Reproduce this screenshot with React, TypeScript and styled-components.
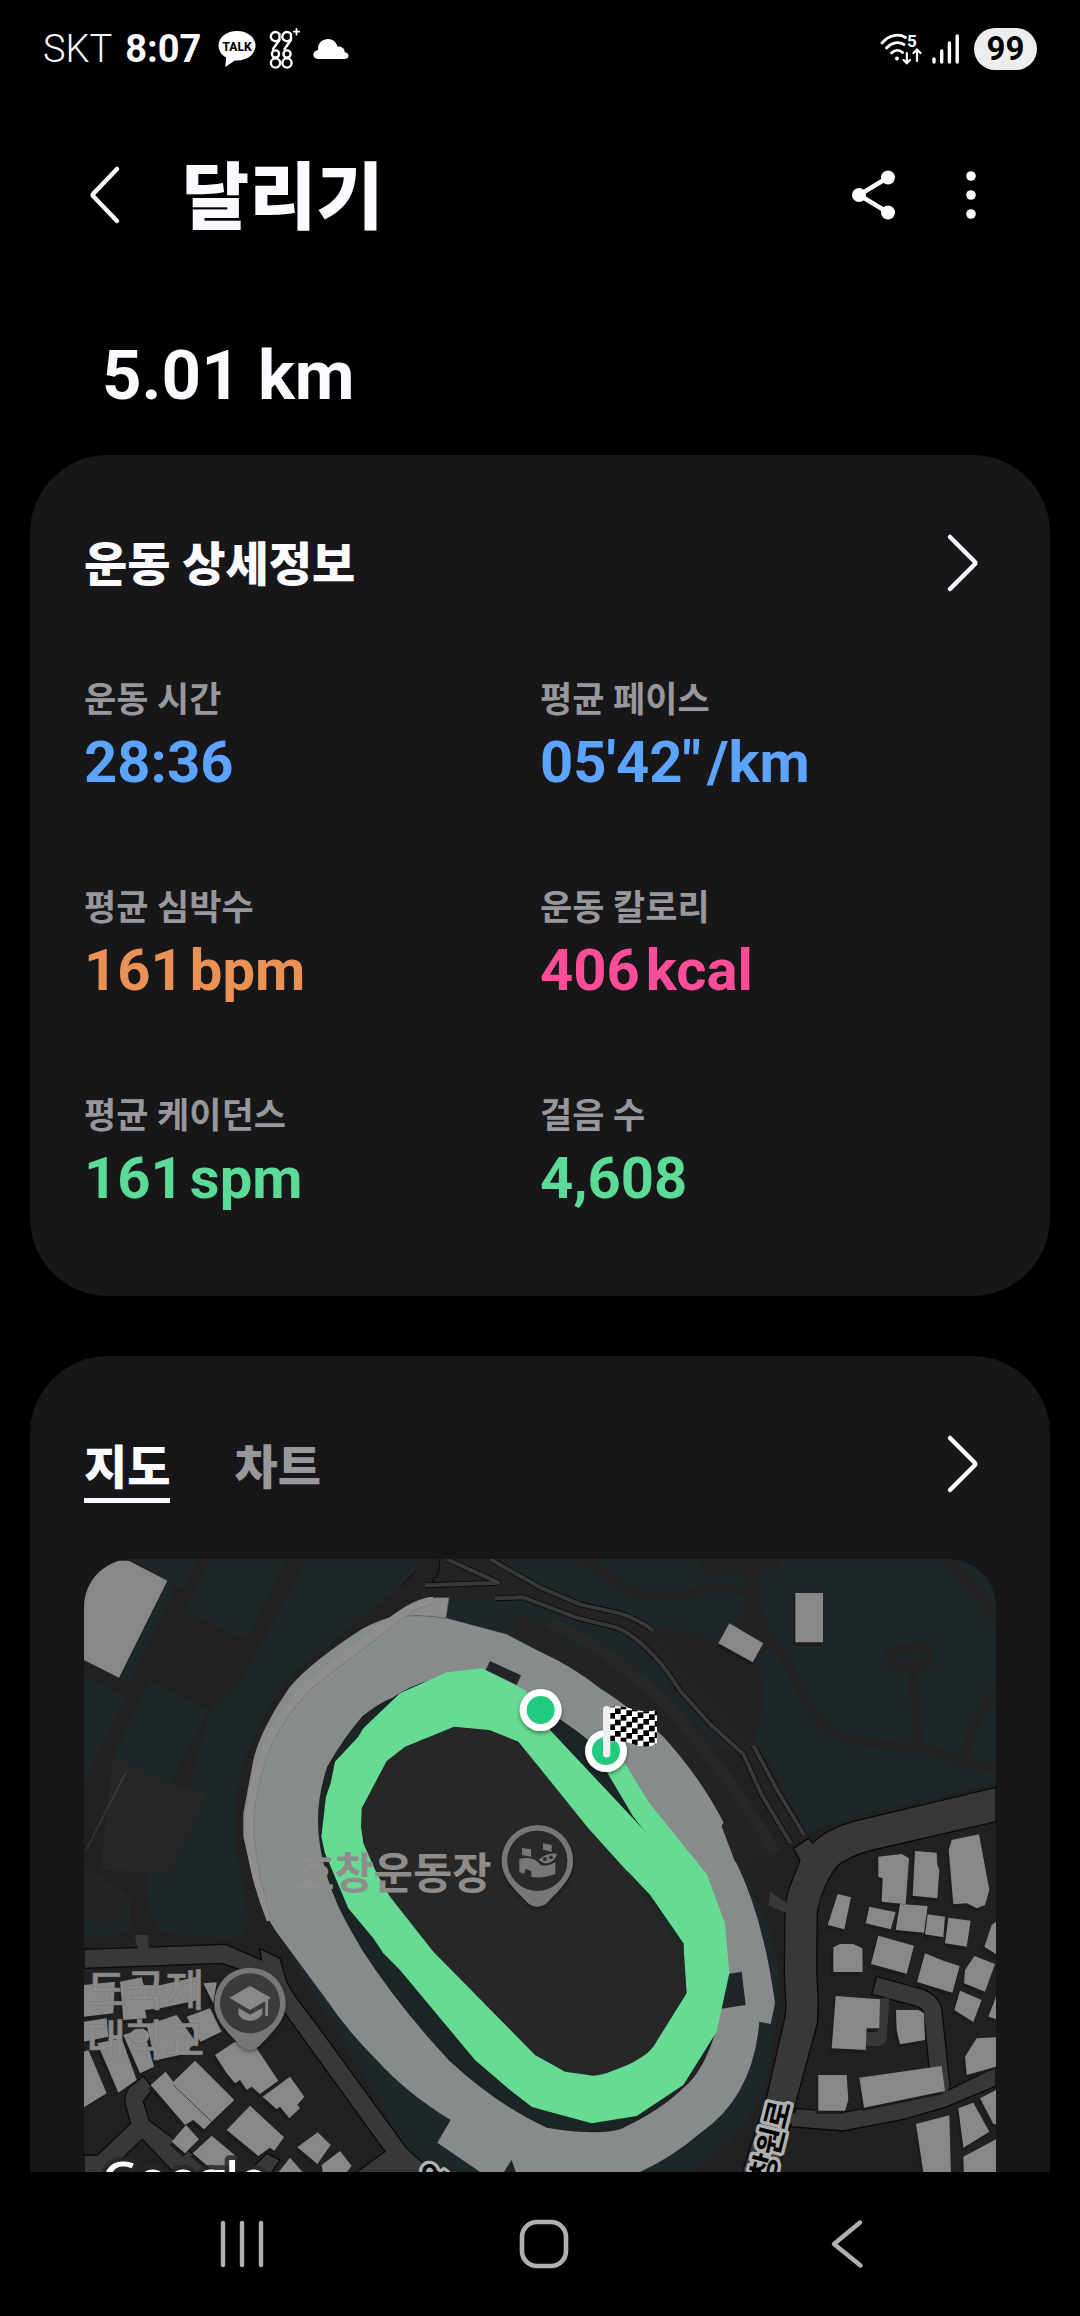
import React from "react";
import styled, { createGlobalStyle } from "styled-components";

const colors = {
  page: "#000000",
  card: "#171719",
  text: "#fafaff",
  muted: "#98979c",
  blue: "#5ca4ff",
  orange: "#ea9255",
  pink: "#ff4d97",
  green: "#5bdb97",
  nav: "#b0b0b0",
};

const GlobalStyle = createGlobalStyle`
  * { box-sizing: border-box; }
  body {
    margin: 0;
    background: ${colors.page};
    color: ${colors.text};
    font-family: Roboto, "Noto Sans CJK KR", sans-serif;
  }
  h1, h2, p, dl, dt, dd { margin: 0; }
  button {
    border: 0;
    padding: 0;
    background: none;
    color: inherit;
    font: inherit;
    cursor: pointer;
  }
  svg { display: block; }
`;

const Screen = styled.div`
  display: flex;
  flex-direction: column;
  height: 100vh;
  overflow: hidden;
`;

const StatusBar = styled.div`
  display: flex;
  flex: none;
  align-items: center;
  justify-content: space-between;
  height: 98px;
  padding: 0 43px;
`;

const StatusGroup = styled.div<{ $gap: number }>`
  display: flex;
  align-items: center;
  gap: ${(p) => p.$gap}px;
`;

const Carrier = styled.span`
  font-size: 38px;
  font-weight: 300;
  line-height: 48px;
`;

const Clock = styled.span`
  margin-right: 4px;
  font-size: 38px;
  font-weight: 700;
  line-height: 48px;
`;

const Battery = styled.span`
  width: 63px;
  margin-left: 4px;
  border-radius: 21px;
  background: #ededed;
  color: #000;
  font-family: Roboto, sans-serif;
  font-size: 33px;
  font-weight: 700;
  line-height: 42px;
  text-align: center;
`;

const AppBar = styled.header`
  display: flex;
  flex: none;
  align-items: center;
  height: 194px;
  padding: 0 76px 0 72px;
`;

const Title = styled.h1`
  flex: 1;
  margin-left: 44px;
  padding-top: 6px;
  font-size: 73px;
  font-weight: 800;
  line-height: 96px;
`;

const Actions = styled.div`
  display: flex;
  gap: 32px;
`;

const IconButton = styled.button`
  display: grid;
  flex: none;
  place-items: center;
  width: 66px;
  height: 66px;
`;

const Content = styled.main`
  flex: 1;
  min-height: 0;
  overflow-y: auto;
  scrollbar-width: none;
`;

const Distance = styled.p`
  padding: 4px 102px 0;
  font-size: 69px;
  font-weight: 700;
  line-height: 159px;
`;

const Card = styled.section`
  margin: 0 30px 60px;
  padding: 54px 54px 81px;
  border-radius: 78px;
  background: ${colors.card};
`;

const CardHeader = styled.div<{ $space: number }>`
  display: flex;
  align-items: center;
  justify-content: space-between;
  height: 108px;
  margin-bottom: ${(p) => p.$space}px;
`;

const CardTitle = styled.h2`
  padding-top: 4px;
  font-size: 47px;
  font-weight: 800;
  line-height: 64px;
`;

const Stats = styled.dl`
  display: grid;
  grid-template-columns: 1fr 1fr;
  row-gap: 84px;
`;

const StatLabel = styled.dt`
  padding-top: 2px;
  color: ${colors.muted};
  font-size: 35px;
  font-weight: 700;
  line-height: 48px;
`;

const StatValue = styled.dd<{ $color: string }>`
  display: flex;
  gap: 6px;
  color: ${(p) => p.$color};
  font-size: 58px;
  font-weight: 700;
  line-height: 74px;
`;

const Tabs = styled.div`
  display: flex;
  gap: 64px;
`;

const Tab = styled.button<{ $active?: boolean }>`
  padding-top: 12px;
  border-bottom: 5px solid ${(p) => (p.$active ? colors.text : "transparent")};
  color: ${(p) => (p.$active ? colors.text : colors.muted)};
  font-size: 47px;
  font-weight: 800;
  line-height: 60px;
`;

const MapFrame = styled.div`
  height: 720px;
  overflow: hidden;
  border-radius: 48px;
  background: #212121;

  svg {
    width: 100%;
    height: 100%;
  }
`;

const NavBar = styled.nav`
  display: grid;
  flex: none;
  grid-template-columns: repeat(3, 1fr);
  align-items: center;
  justify-items: center;
  height: 144px;
  padding: 0 82px 0 91px;
  color: ${colors.nav};
`;

const Chevron = ({ left = false }: { left?: boolean }) => (
  <svg width="34" height="60" viewBox="0 0 34 60" fill="none" stroke={colors.text} strokeWidth="4.5" strokeLinecap="round" strokeLinejoin="round">
    <path d={left ? "M29 4 5.500 28.500Q4 30 5.500 31.500L29 56" : "M4 4 28.500 28.500Q30 30 28.500 31.500L4 56"} />
  </svg>
);

const TalkIcon = () => (
  <svg width="38" height="38" viewBox="0 0 38 38">
    <path fill="#fff" d="M19 1C8.500 1 .5 7.300.5 15.500c0 5 3 9.400 7.600 12L7.300 37l9.500-6.600c12 .9 20.700-6 20.700-14.900C37.500 7.300 29.500 1 19 1Z" />
    <text x="19" y="21" textAnchor="middle" fontFamily="Roboto, sans-serif" fontSize="12" fontWeight="800" fill="#000">TALK</text>
  </svg>
);

const StepIcon = () => (
  <svg width="31" height="42" viewBox="0 0 31 42" fill="none" stroke="#fff" strokeWidth="2.400" strokeLinecap="round">
    <path d="M10.500 6.500A4.600 4.600 0 1 0 10 11.500M10.500 12 4 21M22 6.500A4.600 4.600 0 1 0 21.500 11.500M22 12 15.500 21M10.500 6v5M22 6v5" />
    <circle cx="6.500" cy="26" r="3.600" />
    <circle cx="18" cy="26" r="3.600" />
    <circle cx="6.500" cy="35" r="4.600" />
    <circle cx="18" cy="35" r="4.600" />
    <path d="M27.500 1v5.500M24.800 3.700h5.500" strokeWidth="1.800" />
  </svg>
);

const CloudIcon = () => (
  <svg width="36" height="22" viewBox="0 0 36 22" fill="#fff">
    <path d="M5 21c-6 0-6.400-8 0-9C4.500 5 9.500 1 15 1c4.800 0 8.500 3 9.500 7.500 4-.6 7.500 2 7.200 5.800C37 15 36.500 21 32 21Z" />
  </svg>
);

const WifiIcon = () => (
  <svg width="42" height="32" viewBox="0 0 42 32" fill="none" stroke="#fff" strokeWidth="2.800" strokeLinecap="round">
    <path d="M2 10C9 1.500 19 .5 25.500 4.500M6.500 15C12 9 19 8.500 24 11.500M11.500 20c3.500-3.500 8-3.500 11-.5" />
    <circle cx="17" cy="25.500" r="2" fill="#fff" stroke="none" />
    <path strokeWidth="2.200" d="M26.800 20v10M23.500 27l3.300 3.300L30 27M37 28V17M33.500 20l3.500-3.400 3.500 3.400" />
    <text x="27" y="14" fontFamily="Roboto, sans-serif" fontSize="17" fontWeight="700" fill="#fff" stroke="none">5</text>
  </svg>
);

const SignalIcon = () => (
  <svg width="28" height="32" viewBox="0 0 28 32" stroke="#fff" strokeWidth="3.400" strokeLinecap="round">
    <path d="M2 26v3M9.700 18v11M17.400 10v19M25.200 3v26" />
  </svg>
);

const ShareIcon = () => (
  <svg width="46" height="52" viewBox="0 0 46 52" fill={colors.text} stroke={colors.text}>
    <path d="M38 8.500 9 26 38 43.500" fill="none" strokeWidth="4.500" />
    <g stroke="none">
      <circle cx="38" cy="8.500" r="7" />
      <circle cx="9" cy="26" r="7" />
      <circle cx="38" cy="43.500" r="7" />
    </g>
  </svg>
);

const MoreIcon = () => (
  <svg width="12" height="50" viewBox="0 0 12 50" fill={colors.text}>
    <circle cx="6" cy="6" r="4.800" />
    <circle cx="6" cy="25" r="4.800" />
    <circle cx="6" cy="44" r="4.800" />
  </svg>
);

/* Map drawing: three drawing units to one screen pixel. */

const parks = [
  "M150 27H355L305 118 262 92Z",
  "M395 27H620L497 270 318 180Z",
  "M680 27H1005L1010 60Q960 120 640 370 530 500 480 680 445 860 487 990L505 1110Q505 1160 440 1165L250 1150Q200 1120 195 975L330 700 388 483 480 400Z",
  "M262 92 285 120 150 400 117 383Z",
  "M210 392 388 483 270 700 100 620Z",
  "M12 375 143 440 12 700Z",
  "M12 960 150 1040V1130Q140 1160 12 1165Z",
  "M1080 27H2748V700L2330 800Q2240 825 2180 855L2040 590 1500 640 1100 205 1107 150 1050 100Q1085 70 1080 27Z",
  "M585 1140 740 1350 1112 1710 1072 1778 1210 1866 1270 1960H1060L980 1795Z",
  "M1980 950Q2100 1150 2100 1330L2060 1600Q2000 1760 1830 1870L1700 1960 1500 1900 1990 1430Z",
];

const stadium =
  "M945 200Q1050 192 1100 205L1280 253 1380 305Q1480 350 1560 415 1640 465 1750 560 1860 680 1932 820L1925 828 1965 930Q2050 1100 2085 1360L2072 1422 2038 1415Q2020 1640 1860 1750 1780 1820 1680 1866L1500 1960H1340L1295 1830 1250 1900 1072 1778 1112 1710Q980 1630 890 1530 800 1440 740 1350L585 1140Q545 1080 520 990L490 860V790L520 630Q540 540 630 410 700 330 850 235 910 203 945 200Z";

const stadiumHole =
  "M940 445Q1050 370 1200 380 1330 420 1445 515 1620 630 1750 830 1870 1030 1910 1250L1905 1440Q1870 1560 1810 1610 1740 1680 1620 1735 1550 1755 1400 1730 1250 1660 1110 1530 960 1370 850 1200 790 1100 770 1050 720 930 717 820 715 740 745 650 790 570 850 500 900 460 940 445Z";

const track =
  "M1205 355 1335 420 1410 540 1720 870Q1690 840 1660 800L1580 665 1635 640 1705 755 1870 960Q1882 970 1885 985L1935 1120 1948 1270 1910 1445 1810 1605 1670 1698 1535 1720 1380 1678 1355 1670 1290 1620 1185 1530 960 1260 910 1210 880 1165 805 1075 735 910 724 860 738 740 752 700 765 635 835 560 850 535 960 430 1100 367ZM1122 530 975 590 920 633 845 775 843 830 850 880 890 970 930 1040 1060 1205 1365 1515 1455 1565 1540 1577Q1575 1572 1590 1565 1650 1545 1670 1530 1700 1515 1720 1490L1820 1330 1810 1180 1710 1035 1665 990 1525 835 1380 655 1315 575 1228 540Z";

const trails = [
  "M1500 20Q1560 60 1600 90 1660 140 1770 140 1830 135 1860 120 1920 105 2010 132",
  "M2030 240Q2110 290 2150 400 2200 520 2290 565 2380 585 2520 592 2600 610 2650 640L2748 655",
  "M2430 300 2545 291 2550 342 2433 354Z",
  "M2495 350 2517 580",
  "M2590 20Q2690 110 2748 210",
  "M2748 420Q2660 540 2655 635",
];

const roads = [
  "M2748 712 2330 812Q2240 835 2198 880L2185 865 2140 895 2160 932 2137 990Q2116 1035 2115 1090L2113 1270 2118 1370 2115 1400 2060 1640 1970 1920H2080L2150 1650 2212 1420 2215 1360 2210 1260 2212 1085Q2225 1025 2245 990 2270 940 2300 930 2330 912 2380 900L2748 815Z",
  "M2148 1675 2290 1687 2480 1650 2595 1625 2748 1550V1608L2595 1672 2470 1708 2290 1743 2132 1730Z",
  "M2390 1280 2530 1318Q2575 1335 2585 1375L2610 1605 2555 1630 2530 1385Q2520 1370 2505 1368L2375 1333Z",
  "M12 1198 437 1183 545 1230 538 1195 600 1225 620 1295Q640 1335 700 1410L980 1795 1060 1866V1920H900L830 1866 915 1805 615 1390 540 1290 475 1257 425 1240 12 1255Z",
  "M190 1578 220 1615 190 1655 208 1712 300 1780 420 1880 400 1920H330L187 1768 100 1850 12 1900V1815H52L152 1720 135 1660Q132 1630 150 1610Z",
  "M480 1890 560 1810 600 1830 560 1890Z",
];

const shapes = [
  "148,33 262,92 117,383 12,330 12,27",
  "12,1505 25,1500 80,1630 12,1672",
  "52,1480 125,1465 170,1590 115,1628",
  "130,1455 190,1435 222,1550 180,1570",
  "405,1515 465,1475 530,1495 595,1592 540,1632 515,1610 500,1620 480,1590 465,1600 440,1570",
  "345,1532 463,1650 395,1715 372,1738 340,1710 315,1725 212,1605 257,1565 280,1595",
  "548,1640 630,1580 673,1640 652,1665 660,1675 628,1705 600,1670 590,1678",
  "510,1667 612,1762 583,1802 570,1793 535,1818 440,1740",
  "318,1725 357,1768 315,1810 275,1775",
  "395,1757 470,1820 465,1880 385,1850 338,1810",
  "713,1747 752,1785 712,1842 652,1792",
  "780,1803 815,1848 790,1880 730,1880 725,1845",
  "630,1823 680,1880 585,1880",
  "12,1305 105,1295 100,1390 12,1400",
  "120,1295 185,1282 195,1320 220,1310 350,1280 355,1350 240,1375 195,1380 200,1405 130,1410",
  "12,1415 80,1405 85,1460 12,1475",
  "320,1400 390,1375 425,1445 362,1475 345,1450",
  "200,1425 290,1395 350,1480 300,1515 230,1530 215,1490",
  "370,1300 410,1297 400,1360",
  "2146,129 2229,129 2229,277 2146,277",
  "1948,220 2050,280 2018,337 1915,280",
  "2395,920 2465,912 2487,925 2477,1063 2405,1055 2408,985 2395,980",
  "2505,903 2570,908 2572,945 2578,960 2572,1045 2498,1037",
  "2615,870 2697,853 2728,1020 2715,1065 2690,1075 2660,1060 2620,1063 2606,900",
  "2273,1032 2313,1042 2293,1138 2243,1125",
  "2368,1070 2447,1087 2432,1138 2357,1120",
  "2460,1062 2543,1068 2532,1148 2447,1140",
  "2543,1093 2595,1100 2590,1162 2535,1153",
  "2605,1103 2672,1112 2660,1190 2595,1180",
  "2748,1115 2735,1125 2713,1190 2748,1212",
  "2260,1192 2280,1182 2320,1182 2347,1195 2348,1266 2260,1266",
  "2395,1157 2502,1187 2480,1271 2373,1242",
  "2535,1210 2590,1232 2639,1248 2617,1328 2511,1296",
  "2683,1218 2745,1242 2715,1325 2652,1300 2655,1260",
  "2640,1322 2705,1350 2680,1416 2623,1380",
  "2748,1340 2725,1400 2748,1407",
  "2267,1338 2400,1348 2398,1435 2360,1435 2357,1500 2255,1495",
  "2448,1380 2515,1380 2532,1390 2535,1470 2460,1483 2450,1440",
  "2690,1465 2748,1462 2748,1550 2660,1575 2655,1520",
  "2215,1575 2300,1575 2305,1650 2295,1682 2215,1682",
  "2338,1583 2585,1548 2595,1623 2352,1673",
  "2508,1722 2608,1696 2613,1880 2532,1880",
  "2635,1675 2680,1658 2728,1745 2650,1793",
  "2748,1620 2700,1645 2740,1722 2748,1722",
  "2650,1820 2748,1768 2748,1880 2652,1880",
];

const labelFont = '"Noto Sans CJK KR", sans-serif';

const MapPin = ({ x, y, children }: { x: number; y: number; children: React.ReactNode }) => (
  <g transform={`translate(${x} ${y})`}>
    <path d="M-107 0A107 107 0 1 1 107 0C107 45 80 75 25 130Q0 146-25 130C-80 75-107 45-107 0Z" fill="#777" filter="url(#shadow)" />
    <circle r="90" fill="#3b3b3b" />
    {children}
  </g>
);

const Marker = ({ x, y }: { x: number; y: number }) => (
  <g transform={`translate(${x} ${y})`}>
    <circle r="63" fill="#fff" filter="url(#shadow)" />
    <circle r="42" fill="#20cb80" />
  </g>
);

const FinishFlag = () => (
  <g>
    <clipPath id="flag">
      <path d="M1590 470Q1625 465 1660 478 1695 488 1731 480V582Q1700 597 1665 584 1630 570 1590 575Z" />
    </clipPath>
    <g clipPath="url(#flag)">
      <rect x="1585" y="460" width="150" height="140" fill="#fff" />
      {Array.from({ length: 72 }, (_, i) => {
        const col = i % 9;
        const row = Math.floor(i / 9);
        return (col + row) % 2 === 0 ? (
          <rect key={i} x={1588 + col * 17} y={455 + row * 17 + col * 3} width="17" height="17" fill="#000" />
        ) : null;
      })}
    </g>
    <rect x="1569" y="468" width="22" height="154" rx="11" fill="#f0f0f0" />
  </g>
);

const RouteMap = () => (
  <svg viewBox="12 27 2736 2160" preserveAspectRatio="xMidYMin slice" role="img" aria-label="지도">
    <defs>
      <filter id="shadow" x="-30%" y="-30%" width="160%" height="160%">
        <feDropShadow dx="0" dy="6" stdDeviation="6" floodColor="#000" floodOpacity="0.45" />
      </filter>
    </defs>
    <rect x="0" y="0" width="2760" height="2200" fill="#212121" />
    <g fill="#1e2627">{parks.map((d) => <path key={d} d={d} />)}</g>
    <path d="M100 620 270 700 380 730 265 970 60 960Z" fill="#262626" />
    <path d="M130 675 145 660 20 900 12 910Z" fill="#393939" />
    <path d="M12 960 60 975 145 1040 110 1125 80 1130 12 1090Z" fill="#252525" />
    <g fill="none" stroke="#222" strokeWidth="26">{trails.map((d) => <path key={d} d={d} />)}</g>
    <path d="M1870 27H2098V45Q2090 60 2037 62L2045 160Q2055 240 2090 280L2040 320 1960 250Q2010 200 1995 120L1985 65 1910 78Q1860 75 1855 40Z" fill="#222" />
    <path d="M1725 240Q1850 235 1920 285L2020 337Q2050 350 2050 440 2045 510 2020 580L1985 612 1880 520 1780 400Z" fill="#222" />
    <path d="M1290 240Q1620 400 1800 610 1940 780 2030 930" fill="none" stroke="#232323" strokeWidth="110" />
    <path d="M1410 215Q1660 330 1850 570 2000 750 2085 910" fill="none" stroke="#272727" strokeWidth="34" />

    <path d="M1050 100 1110 27H1230L1400 110Q1540 170 1620 182 1680 205 1722 240L1890 440 2020 580 2090 710 2178 860 2132 888 2040 740 1990 620 1760 370Q1690 280 1610 240L1490 210 1330 148 1100 150Z" fill="#232323" />
    <g fill="none" stroke="#0a0a0a" strokeWidth="17" strokeLinejoin="round">
      <path d="M1230 27 1380 112 1500 163 1620 190Q1680 210 1720 242" />
      <path d="M1245 145 1330 142 1490 203 1610 233Q1680 262 1760 362L1800 422 1890 522 1990 612 2046 736 2132 880" />
      <path d="M2020 586 2086 710 2172 855" />
      <path d="M1100 27 1255 98 1035 106" />
      <path d="M1079 27Q1085 80 1040 110M1010 62 965 108" strokeWidth="3" />
    </g>
    <g fill="none" stroke="#383838" strokeWidth="12" strokeLinejoin="round">
      <path d="M1230 27 1380 112 1500 163 1620 190Q1680 210 1720 242" />
      <path d="M1245 145 1330 142 1490 203 1610 233Q1680 262 1760 362L1800 422 1890 522 1990 612 2046 736 2132 880" />
      <path d="M2020 586 2086 710 2172 855" />
      <path d="M1100 27 1255 98 1035 106" />
    </g>

    <g fill="#383838">
      <g stroke="#0a0a0a" strokeWidth="4">{roads.map((d) => <path key={d} d={d} />)}</g>
      <path d="M2400 1345H2428L2420 1470Q2415 1488 2390 1488H2350L2355 1450 2398 1440ZM2070 1025 2120 1058V1090L2065 1065ZM165 1155H203L207 1198H173Z" />
      <path d="M2120 1690 2200 1690 2180 1722 2110 1722ZM2540 1600 2608 1606 2595 1650 2540 1640Z" />
    </g>

    <g fill="#1b1b1b" transform="translate(-6 10)">{shapes.slice(1).map((p) => <polygon key={p} points={p} />)}</g>
    <g fill="#888">{shapes.map((p) => <polygon key={p} points={p} />)}</g>
    <path d="M280 1605 395 1715" stroke="#444" strokeWidth="3" />

    <path d={stadium} fill="#878b8b" />
    <path d="M935 203Q1000 143 1060 143H1107L1098 205Q1020 190 935 203Z" fill="#8b8c8c" stroke="#555" strokeWidth="2" />
    <path d="M1060 152Q1000 158 915 228L690 400Q590 500 548 620 520 720 508 800V860Q520 980 572 1110" fill="none" stroke="#8f8e8e" strokeWidth="24" />
    <path d="M1060 162Q1000 172 925 240L700 410Q600 510 558 625 530 720 522 800V860Q535 990 580 1120" fill="none" stroke="#7b7c7c" strokeWidth="3" />
    <path d="M1932 815 2010 930 1965 935 1925 828Z" fill="#232323" />
    <path d={stadiumHole} fill="#1c2526" stroke="#202222" strokeWidth="6" />
    <path d="M1122 500 900 620 820 800 860 960 1050 1230 1380 1560 1560 1600 1740 1510 1850 1330 1810 1150 1640 950 1380 640 1250 530Z" fill="#272727" />
    <path d="M1310 650 1700 1080 1815 1180 1780 1050 1640 930Z" fill="#272727" />
    <path d="M1230 333 1323 376 1310 405 1217 360ZM1940 1273 1985 1265 1997 1365 1915 1378Z" fill="#202627" />
    <path d={track} fill="#66db93" fillRule="evenodd" />
    <path d="M1640 960 1710 1035 1810 1180 1812 1205 1700 1055Z" fill="#1d2726" />

    <g fontFamily={labelFont} fill="#8f8d8b">
      <text x="646" y="1018" fontSize="128" fontWeight="700">효창운동장</text>
      <g fontSize="128" fontWeight="500" fill="#8b8b8b" stroke="#7d7d7d" strokeWidth="2">
        <text x="20" y="1368">도국제</text>
        <text x="20" y="1518">대학교</text>
      </g>
    </g>

    <MapPin x={1372} y={932}>
      <circle r="90" fill="#292929" />
      <g fill="#777">
        <path d="M-46-38-19-34V-12L-46-17ZM17-52 43-47V-27L17-33Z" />
        <path d="M-54-5Q-10-15 10 13 30 20 54 5V40Q15 55-18 48V32L-35 24-40 39-54 34Z" />
        <path d="M0-3Q30-30 62-22 55 5 30 10 15 10 0-3Z" stroke="#292929" strokeWidth="4" />
        <path d="M18-10H28V0H18ZM36-15H46V-5H36Z" fill="#292929" />
      </g>
    </MapPin>
    <MapPin x={510} y={1360}>
      <g fill="#888">
        <path d="M0-52 63-17 0 20-62-17Z" />
        <path d="M-35 14 0 34 37 14V33Q25 52 0 52-25 52-35 33Z" />
        <path d="M46-12 54-16V38H46Z" />
      </g>
    </MapPin>

    <Marker x={1382} y={480} />
    <Marker x={1578} y={603} />
    <FinishFlag />

    <g fontFamily={labelFont} fontWeight="700" fill="#000" stroke="#b0b0b0" strokeWidth="20" strokeLinejoin="round" paintOrder="stroke">
      <text fontSize="88" transform="translate(2074 1898) rotate(-76)">창원로</text>
      <text fontSize="88" transform="translate(1000 1888) rotate(35)">연</text>
    </g>
    <text x="66" y="1942" fontFamily='"Open Sans", sans-serif' fontSize="148" fontWeight="600" fill="#fff" stroke="#262626" strokeWidth="28" strokeOpacity="0.8" paintOrder="stroke" strokeLinejoin="round">
      Google
    </text>
  </svg>
);

type Stat = { label: string; value: string; unit?: string; color: string };

const stats: Stat[] = [
  { label: "운동 시간", value: "28:36", color: colors.blue },
  { label: "평균 페이스", value: "05'42\"", unit: "/km", color: colors.blue },
  { label: "평균 심박수", value: "161", unit: "bpm", color: colors.orange },
  { label: "운동 칼로리", value: "406", unit: "kcal", color: colors.pink },
  { label: "평균 케이던스", value: "161", unit: "spm", color: colors.green },
  { label: "걸음 수", value: "4,608", color: colors.green },
];

export default function App() {
  return (
    <>
      <GlobalStyle />
      <Screen>
        <StatusBar>
          <StatusGroup $gap={13}>
            <Carrier>SKT</Carrier>
            <Clock>8:07</Clock>
            <TalkIcon />
            <StepIcon />
            <CloudIcon />
          </StatusGroup>
          <StatusGroup $gap={10}>
            <WifiIcon />
            <SignalIcon />
            <Battery>99</Battery>
          </StatusGroup>
        </StatusBar>
        <AppBar>
          <IconButton aria-label="뒤로">
            <Chevron left />
          </IconButton>
          <Title>달리기</Title>
          <Actions>
            <IconButton aria-label="공유">
              <ShareIcon />
            </IconButton>
            <IconButton aria-label="더보기">
              <MoreIcon />
            </IconButton>
          </Actions>
        </AppBar>
        <Content>
          <Distance>5.01 km</Distance>
          <Card>
            <CardHeader $space={58}>
              <CardTitle>운동 상세정보</CardTitle>
              <IconButton aria-label="운동 상세정보 보기">
                <Chevron />
              </IconButton>
            </CardHeader>
            <Stats>
              {stats.map((s) => (
                <div key={s.label}>
                  <StatLabel>{s.label}</StatLabel>
                  <StatValue $color={s.color}>
                    <span>{s.value}</span>
                    {s.unit && <span>{s.unit}</span>}
                  </StatValue>
                </div>
              ))}
            </Stats>
          </Card>
          <Card>
            <CardHeader $space={41}>
              <Tabs role="tablist">
                <Tab role="tab" aria-selected="true" $active>지도</Tab>
                <Tab role="tab" aria-selected="false">차트</Tab>
              </Tabs>
              <IconButton aria-label="지도 보기">
                <Chevron />
              </IconButton>
            </CardHeader>
            <MapFrame>
              <RouteMap />
            </MapFrame>
          </Card>
        </Content>
        <NavBar>
          <IconButton aria-label="최근 앱">
            <svg width="44" height="50" viewBox="0 0 44 50" stroke="currentColor" strokeWidth="4.400" strokeLinecap="round">
              <path d="M3 4v42M22 4v42M41 4v42" />
            </svg>
          </IconButton>
          <IconButton aria-label="홈">
            <svg width="50" height="50" viewBox="0 0 50 50" fill="none" stroke="currentColor" strokeWidth="4.600">
              <rect x="3" y="3" width="44" height="44" rx="15" />
            </svg>
          </IconButton>
          <IconButton aria-label="이전">
            <svg width="34" height="50" viewBox="0 0 34 50" fill="none" stroke="currentColor" strokeWidth="4.400" strokeLinecap="round" strokeLinejoin="round">
              <path d="M30 3.500 4 25 30.500 46.500" />
            </svg>
          </IconButton>
        </NavBar>
      </Screen>
    </>
  );
}
